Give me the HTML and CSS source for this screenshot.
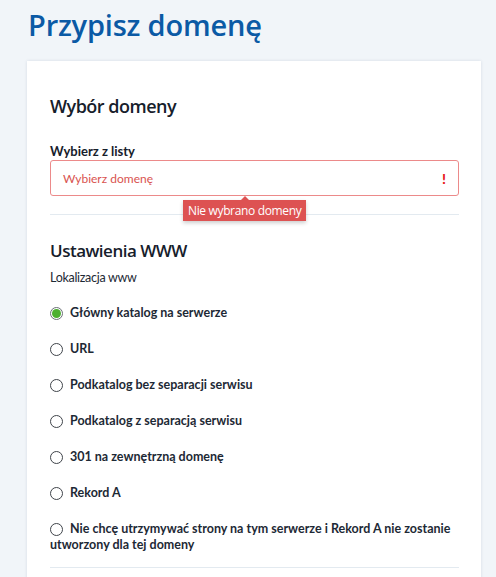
FILE: index.html
```html
<!DOCTYPE html>
<html lang="pl">
<head>
<meta charset="utf-8">
<link rel="stylesheet" href="styles.css">
</head>
<body>
<h1 class="page-title">Przypisz domenę</h1>
<div class="card">
  <h2 class="section-title">Wybór domeny</h2>
  <div class="field">
    <label class="field-label">Wybierz z listy</label>
    <div class="select invalid">
      <span class="placeholder">Wybierz domenę</span>
      <span class="bang">!</span>
      <div class="tooltip">Nie wybrano domeny</div>
    </div>
  </div>
  <hr class="divider">
  <h2 class="section-title www">Ustawienia WWW</h2>
  <div class="sub-label">Lokalizacja www</div>
  <ul class="radios">
    <li class="radio checked"><span class="dot"></span>Główny katalog na serwerze</li>
    <li class="radio"><span class="dot"></span>URL</li>
    <li class="radio"><span class="dot"></span>Podkatalog bez separacji serwisu</li>
    <li class="radio"><span class="dot"></span>Podkatalog z separacją serwisu</li>
    <li class="radio"><span class="dot"></span>301 na zewnętrzną domenę</li>
    <li class="radio"><span class="dot"></span>Rekord A</li>
    <li class="radio multi"><span class="dot"></span>Nie chcę utrzymywać strony na tym serwerze i Rekord A nie zostanie utworzony dla tej domeny</li>
  </ul>
  <hr class="divider bottom">
</div>
</body>
</html>
```
FILE: styles.css
```css
html, body {
  margin: 0;
  padding: 0;
  background: #f1f5f9;
}
body {
  font-family: Lato, "Open Sans", sans-serif;
  color: #1d2935;
  padding: 0 15px 0 27px;
  overflow: hidden;
  height: 577px;
  box-sizing: border-box;
}
.page-title {
  margin: 0;
  padding: 6px 0 0 1px;
  height: 55px;
  box-sizing: border-box;
  font-family: "Open Sans", sans-serif;
  font-weight: 600;
  font-size: 29px;
  line-height: 38px;
  color: #0b5aa5;
  letter-spacing: -0.2px;
}
.card {
  margin-top: 6px;
  background: #fff;
  box-shadow: 0 0 3px rgba(0, 40, 80, 0.12);
  padding: 33px 22px 20px 23px;
  min-height: 600px;
}
.section-title {
  margin: 0;
  font-family: "Open Sans", sans-serif;
  font-weight: 600;
  font-size: 18px;
  line-height: 24px;
  letter-spacing: -0.5px;
  color: #16202b;
}
.field {
  margin-top: 25px;
}
.field-label {
  display: block;
  font-weight: 700;
  font-size: 13px;
  line-height: 16px;
  margin-bottom: 1px;
  color: #16202b;
}
.select {
  position: relative;
  height: 36px;
  box-sizing: border-box;
  border: 1px solid #ec8a8a;
  border-radius: 3px;
  display: flex;
  align-items: center;
  justify-content: space-between;
  padding: 0 12px 0 12px;
}
.placeholder {
  font-size: 12px;
  color: #d9534f;
}
.bang {
  font-weight: 900;
  font-size: 14px;
  color: #e8161b;
}
.tooltip {
  position: absolute;
  left: 132px;
  top: 39px;
  background: #dd5252;
  color: #fff;
  font-family: "Open Sans", sans-serif;
  font-size: 12px;
  letter-spacing: -0.35px;
  line-height: 21px;
  padding: 0 5px;
  white-space: nowrap;
  box-shadow: 0 2px 4px rgba(0,0,0,0.2);
}
.tooltip::before {
  content: "";
  position: absolute;
  left: 50%;
  top: -4px;
  margin-left: -4px;
  border-left: 4px solid transparent;
  border-right: 4px solid transparent;
  border-bottom: 4px solid #dd5252;
}
.divider {
  border: 0;
  border-top: 1px solid #e3eaf0;
  margin: 18px 0 0;
}
.www {
  margin-top: 24px;
  font-size: 17px;
  letter-spacing: -0.5px;
}
.sub-label {
  margin-top: 7px;
  font-size: 12.5px;
  line-height: 16px;
  letter-spacing: -0.3px;
  color: #1d2935;
}
.radios {
  list-style: none;
  margin: 19px 0 0;
  padding: 0;
}
.radio {
  position: relative;
  font-weight: 700;
  font-size: 12.5px;
  line-height: 16px;
  color: #1d2935;
  padding: 0 0 0 20px;
  min-height: 16px;
  margin-bottom: 20px;
}
.radio.multi {
  padding-left: 0;
  text-indent: 20px;
  margin-bottom: 14px;
}
.dot {
  position: absolute;
  left: 0;
  top: 1.5px;
  width: 13px;
  height: 13px;
  box-sizing: border-box;
  border: 1.5px solid #3f444a;
  border-radius: 50%;
  background: #fff;
}
.radio.checked .dot {
  border-color: #6b7076;
  border-width: 1px;
}
.radio.checked .dot::after {
  content: "";
  position: absolute;
  left: 1px;
  top: 1px;
  width: 9px;
  height: 9px;
  border-radius: 50%;
  background: #4cb030;
}
.divider.bottom {
  margin-top: 0;
}
```
